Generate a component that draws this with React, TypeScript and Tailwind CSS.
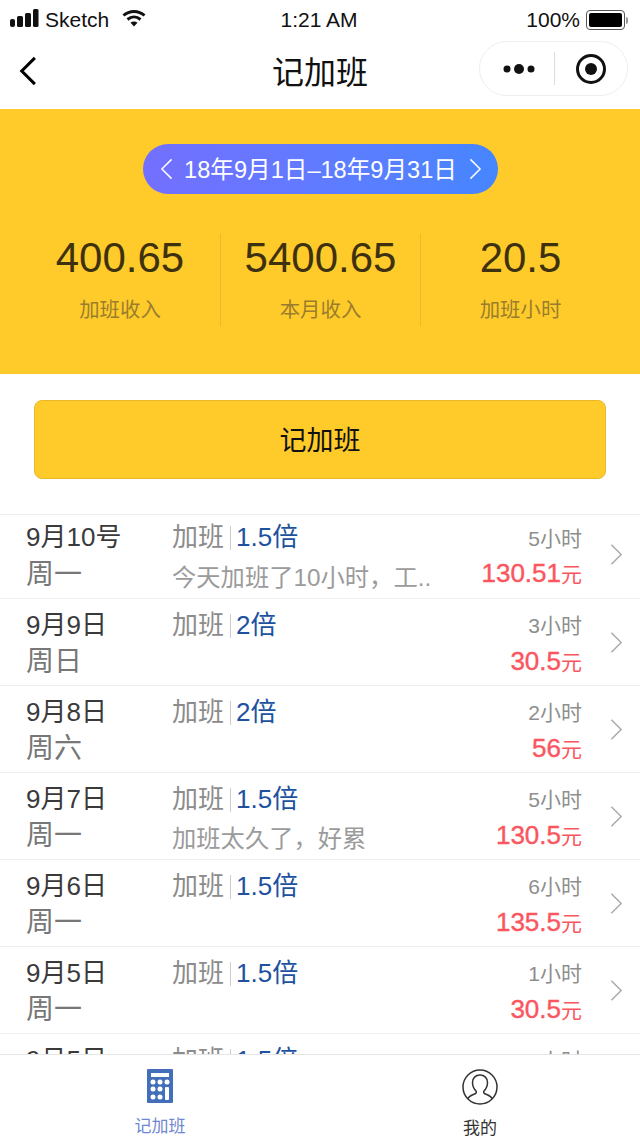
import React from "react";

type Row = { date: string; week: string; rate: string; note?: string; hours: string; pay: string; first?: boolean };
const rows: Row[] = [
  { date: "9月10号", week: "周一", rate: "1.5倍", note: "今天加班了10小时，工..", hours: "5小时", pay: "130.51", first: true },
  { date: "9月9日", week: "周日", rate: "2倍", hours: "3小时", pay: "30.5" },
  { date: "9月8日", week: "周六", rate: "2倍", hours: "2小时", pay: "56" },
  { date: "9月7日", week: "周一", rate: "1.5倍", note: "加班太久了，好累", hours: "5小时", pay: "130.5" },
  { date: "9月6日", week: "周一", rate: "1.5倍", hours: "6小时", pay: "135.5" },
  { date: "9月5日", week: "周一", rate: "1.5倍", hours: "1小时", pay: "30.5" },
  { date: "9月5日", week: "周一", rate: "1.5倍", hours: "1小时", pay: "30.5" },
];

function Chevron({ left, className, width = 1.6 }: { left?: boolean; className?: string; width?: number }) {
  return (
    <svg viewBox="0 0 14 24" className={className} fill="none" stroke="currentColor" strokeWidth={width}>
      <path d={left ? "M12.5 1.5 2 12l10.5 10.5" : "M1.5 1.5 12 12 1.5 22.5"} />
    </svg>
  );
}

function StatusBar() {
  return (
    <div className="flex h-10 items-center justify-between pl-[10px] pr-[12px] text-[21px] text-[#111]">
      <div className="flex w-[200px] items-center">
        <svg width="29" height="18" viewBox="0 0 29 18" fill="#111" className="-mt-[4px]">
          <rect x="0" y="10" width="5" height="8" rx="2" />
          <rect x="7" y="7" width="6" height="11" rx="1.5" />
          <rect x="15" y="4" width="6" height="14" rx="1.5" />
          <rect x="23" y="0" width="5.500" height="18" rx="1.5" />
        </svg>
        <span className="ml-[6px]">Sketch</span>
        <svg width="24" height="18" viewBox="0 0 24 18" className="ml-[13px] -mt-1" fill="none" stroke="#111" strokeWidth="3">
          <path d="M1.500 6.500C7.500 1 16.500 1 22.500 6.500" />
          <path d="M5.500 10.500C9.500 7 14.500 7 18.500 10.500" />
          <path d="M12 17.500l-3.500-3.800c2-1.600 5-1.600 7 0z" fill="#111" stroke="none" />
        </svg>
      </div>
      <span className="font-medium">1:21 AM</span>
      <div className="flex w-[200px] items-center justify-end">
        <span>100%</span>
        <div className="ml-[6px] flex h-[20px] w-[39px] items-center rounded-[4px] border border-[#555] p-[2px]">
          <div className="h-full w-full rounded-[2px] bg-black" />
        </div>
        <div className="ml-[1px] h-[7px] w-[2px] rounded-r bg-[#999]" />
      </div>
    </div>
  );
}

function NavBar() {
  return (
    <div className="relative flex h-[69px] items-center justify-center">
      <Chevron left width={2.4} className="absolute left-[19px] top-[16px] h-[30px] w-[18px] text-black" />
      <span className="-mt-[4px] text-[32px] leading-none text-[#111]">记加班</span>
      <div className="absolute right-[12px] top-[1px] flex h-[55px] w-[149px] items-center rounded-full border border-[#eeeeee] bg-white">
        <svg width="34" height="12" viewBox="0 0 34 12" className="ml-[22px]" fill="#111">
          <circle cx="5" cy="6" r="3.500" />
          <circle cx="17" cy="6" r="5" />
          <circle cx="29" cy="6" r="3.500" />
        </svg>
        <div className="ml-[18px] h-[33px] w-px bg-[#dddddd]" />
        <svg width="32" height="32" viewBox="0 0 32 32" className="ml-[20px]">
          <circle cx="16" cy="16" r="13.500" fill="none" stroke="#111" strokeWidth="3" />
          <circle cx="16" cy="16" r="6" fill="#111" />
        </svg>
      </div>
    </div>
  );
}

function Stat({ value, label, line }: { value: string; label: string; line?: boolean }) {
  return (
    <div className={`flex h-[92px] flex-col items-center ${line ? "border-l border-[#e8b92c]" : ""}`}>
      <span className="mt-px text-[42px] leading-[46px] text-[#3e3110]">{value}</span>
      <span className="mt-[16px] text-[20.4px] leading-[26px] text-[#9a7d2c]">{label}</span>
    </div>
  );
}

function Header() {
  return (
    <div className="flex h-[265px] shrink-0 flex-col items-center bg-[#ffcb2b] pt-[35px]">
      <div className="flex h-[50px] w-[355px] items-center justify-between rounded-full bg-gradient-to-r from-[#736fff] to-[#4586ff] pl-[17px] pr-[16px] text-white">
        <Chevron left className="h-[22px] w-[13px]" />
        <span className="whitespace-nowrap pt-[3px] text-[23.6px] leading-none">18年9月1日–18年9月31日</span>
        <Chevron className="h-[22px] w-[13px]" />
      </div>
      <div className="mt-[40px] grid w-full grid-cols-3 px-[20px]">
        <Stat value="400.65" label="加班收入" />
        <Stat value="5400.65" label="本月收入" line />
        <Stat value="20.5" label="加班小时" line />
      </div>
    </div>
  );
}

function ListRow({ r }: { r: Row }) {
  return (
    <div className={`flex shrink-0 border-b border-[#eeeeee] pl-[26px] pr-[17px] ${r.first ? "h-[84px] pt-[4px]" : "h-[87px] pt-[8px]"}`}>
      <div className="w-[146px]">
        <div className="h-[37px] text-[26px] leading-[37px] text-[#3a3a3a]">{r.date}</div>
        <div className={`text-[28px] text-[#777777] ${r.first ? "h-[37px] leading-[37px]" : "h-[36px] leading-[35px]"}`}>{r.week}</div>
      </div>
      <div className="w-[270px]">
        <div className="flex h-[37px] items-center text-[26px] leading-[37px]">
          <span className="text-[#8c8c8c]">加班</span>
          <span className="ml-[6px] mr-[5px] h-[24px] w-px bg-[#cccccc]" />
          <span className="text-[#20519f]">{r.rate}</span>
        </div>
        {r.note && <div className={`h-[37px] whitespace-nowrap text-[24.3px] leading-[37px] text-[#9b9b9b] ${r.first ? "mt-[3px]" : "mt-[2px]"}`}>{r.note}</div>}
      </div>
      <div className={`w-[140px] whitespace-nowrap text-right ${r.first ? "pt-[2px]" : "pt-[1px]"}`}>
        <div className={`text-[21px] leading-[35px] text-[#8e8e8e] ${r.first ? "h-[34px]" : "h-[35px]"}`}>{r.hours}</div>
        <div className="h-[37px] text-[26px] leading-[37px] text-[#fa5660] [-webkit-text-stroke:0.4px_#fa5660]">
          {r.pay}<span className="text-[21px] [-webkit-text-stroke:0]">元</span>
        </div>
      </div>
      <div className="flex flex-1 items-center justify-end pb-[8px]">
        <Chevron className="h-[23px] w-[13px] text-[#aaaaaa]" />
      </div>
    </div>
  );
}

function TabBar() {
  return (
    <div className="grid h-[84px] shrink-0 grid-cols-2 border-t border-[#e5e5e5] bg-white">
      <div className="flex flex-col items-center pt-[14px]">
        <svg width="26" height="34" viewBox="0 0 26 34">
          <rect width="26" height="34" rx="1" fill="#436eb9" />
          <rect x="4" y="4" width="18" height="4" fill="#fff" />
          {[13, 20, 28].map((y) => [6, 13].map((x) => <circle key={`${x}-${y}`} cx={x} cy={y} r="2.500" fill="#fff" />))}
          <circle cx="20" cy="13" r="2.500" fill="#fff" />
          <rect x="18" y="18" width="4" height="13" rx="1" fill="#fff" />
        </svg>
        <span className="mt-[14px] text-[17px] leading-[20px] text-[#6f88d2]">记加班</span>
      </div>
      <div className="flex flex-col items-center pt-[14px]">
        <svg width="36" height="36" viewBox="0 0 36 36" fill="none" stroke="#333" strokeWidth="1.500">
          <circle cx="18" cy="18" r="17" />
          <path d="M18 6c-4.500 0-7.500 3.200-7.500 7.500 0 3.500 1.500 6.500 3.500 8.500.6.800.4 2-.5 2.500-2.500 1.400-6.500 2-7.800 5.500M18 6c4.500 0 7.500 3.200 7.500 7.500 0 3.500-1.500 6.500-3.500 8.500-.6.800-.4 2 .5 2.500 2.500 1.400 6.500 2 7.800 5.500" />
        </svg>
        <span className="mt-[14px] text-[17px] leading-[20px] text-[#333333]">我的</span>
      </div>
    </div>
  );
}

export default function App() {
  return (
    <div className="flex h-[1138px] w-[640px] flex-col overflow-hidden bg-white font-['Liberation_Sans','Noto_Sans_CJK_SC',sans-serif]">
      <StatusBar />
      <NavBar />
      <Header />
      <div className="flex h-[140px] shrink-0 flex-col items-center pt-[26px]">
        <div className="flex h-[79px] w-[572px] items-center justify-center rounded-[8px] border border-[#eab92a] bg-[#ffcb2b] pt-[3px] text-[27px] text-[#111]">记加班</div>
      </div>
      <div className="flex min-h-0 flex-1 flex-col overflow-hidden border-t border-[#eeeeee]">
        {rows.map((r, i) => <ListRow key={i} r={r} />)}
      </div>
      <TabBar />
    </div>
  );
}
